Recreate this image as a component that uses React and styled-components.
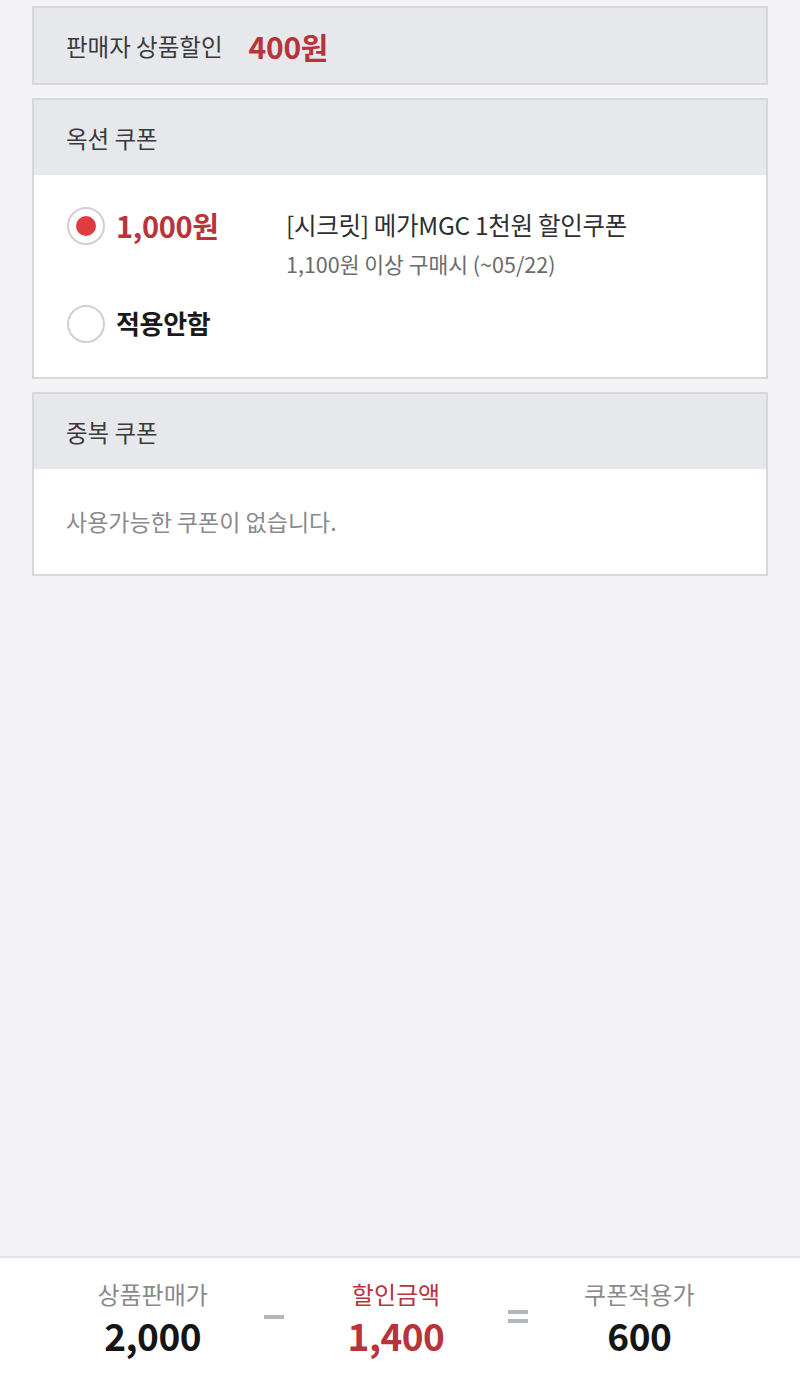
import React, { useState } from 'react';
import styled, { createGlobalStyle } from 'styled-components';

const GlobalStyle = createGlobalStyle`
  html, body {
    margin: 0;
    padding: 0;
    background: #f4f4f6;
  }
  body {
    font-family: "Noto Sans CJK KR", "Noto Sans", sans-serif;
    -webkit-font-smoothing: antialiased;
  }
`;

const Page = styled.div`
  min-height: 1374px;
  display: flex;
  flex-flow: column nowrap;
  box-sizing: border-box;
`;

const Content = styled.div`
  display: flex;
  flex-flow: column nowrap;
  gap: 13px;
  padding: 6px 32px 0;
`;

const Card = styled.div`
  border: 2px solid #d6d8dc;
  background: #ffffff;
`;

const CardHead = styled.div`
  height: 75px;
  display: flex;
  align-items: center;
  padding: 0 32px;
  background: #e7e8ec;
  font-size: 23.5px;
  color: #3a3a3c;
  letter-spacing: 0;
  span {
    margin-left: 26px;
    font-size: 30px;
    font-weight: 700;
    color: #b8333a;
    letter-spacing: -0.3px;
  }
`;

const CardBody = styled.div`
  padding: ${(p) => p.$pad || '24px 32px'};
  display: flex;
  flex-flow: column nowrap;
  gap: ${(p) => p.$gap || '0'};
`;

const OptionRow = styled.label`
  display: grid;
  grid-template-columns: 50px 170px 1fr;
  align-items: start;
  cursor: pointer;
`;

const Radio = styled.span`
  width: 34px;
  height: 34px;
  margin-left: 1px;
  margin-top: 1px;
  border-radius: 50%;
  border: 2px solid #cfd0d3;
  background: #fff;
  display: flex;
  align-items: center;
  justify-content: center;
  &::after {
    content: '';
    width: 20px;
    height: 20px;
    border-radius: 50%;
    background: ${(p) => (p.$checked ? '#e03c40' : 'transparent')};
  }
`;

const Amount = styled.div`
  font-size: ${(p) => (p.$red ? '29px' : '26px')};
  font-weight: 700;
  line-height: 38px;
  color: ${(p) => (p.$red ? '#b8333a' : '#1a1a1a')};
  letter-spacing: -0.3px;
`;

const CouponInfo = styled.div`
  display: flex;
  flex-flow: column nowrap;
  gap: 6px;
`;

const CouponTitle = styled.div`
  font-size: 24.5px;
  line-height: 38px;
  color: #2f2f31;
  letter-spacing: -0.3px;
`;

const CouponSub = styled.div`
  font-size: 21.5px;
  line-height: 28px;
  color: #6b6b6e;
  letter-spacing: 0;
`;

const Empty = styled.div`
  font-size: 23px;
  line-height: 30px;
  color: #8a8a8d;
  letter-spacing: 0;
`;

const Summary = styled.div`
  margin-top: auto;
  height: 116px;
  border-top: 2px solid #e3e4e7;
  background: #ffffff;
  display: grid;
  grid-template-columns: 1fr 0 1fr 0 1fr;
  padding: 0 39px 0 31px;
  align-items: center;
`;

const SumCol = styled.div`
  display: flex;
  flex-flow: column nowrap;
  align-items: center;
  padding-top: 4px;
`;

const SumLabel = styled.div`
  font-size: 24px;
  line-height: 34px;
  color: ${(p) => (p.$red ? '#b8333a' : '#8a8a8d')};
  letter-spacing: 0;
`;

const SumValue = styled.div`
  font-size: 37px;
  line-height: 48px;
  font-weight: 700;
  color: ${(p) => (p.$red ? '#b8333a' : '#151515')};
  letter-spacing: -0.5px;
`;

const Operator = styled.div`
  justify-self: center;
  width: 24px;
  margin-top: ${(p) => p.$offset || '0'};
  display: flex;
  flex-flow: column nowrap;
  gap: 5px;
  align-items: center;
  i {
    display: block;
    width: 20px;
    height: 4px;
    background: #b4b6be;
  }
`;

const coupons = [
  {
    id: 'mgc',
    amount: '1,000원',
    title: '[시크릿] 메가MGC 1천원 할인쿠폰',
    sub: '1,100원 이상 구매시 (~05/22)',
  },
];

export default function App() {
  const [selected, setSelected] = useState('mgc');

  return (
    <Page>
      <GlobalStyle />
      <Content>
        <Card>
          <CardHead>
            판매자 상품할인<span>400원</span>
          </CardHead>
        </Card>

        <Card>
          <CardHead>옥션 쿠폰</CardHead>
          <CardBody $pad="31px 32px 34px" $gap="26px">
            {coupons.map((c) => (
              <OptionRow key={c.id} onClick={() => setSelected(c.id)}>
                <Radio $checked={selected === c.id} />
                <Amount $red>{c.amount}</Amount>
                <CouponInfo>
                  <CouponTitle>{c.title}</CouponTitle>
                  <CouponSub>{c.sub}</CouponSub>
                </CouponInfo>
              </OptionRow>
            ))}
            <OptionRow onClick={() => setSelected('none')}>
              <Radio $checked={selected === 'none'} />
              <Amount>적용안함</Amount>
            </OptionRow>
          </CardBody>
        </Card>

        <Card>
          <CardHead>중복 쿠폰</CardHead>
          <CardBody $pad="37px 32px 38px">
            <Empty>사용가능한 쿠폰이 없습니다.</Empty>
          </CardBody>
        </Card>
      </Content>

      <Summary>
        <SumCol>
          <SumLabel>상품판매가</SumLabel>
          <SumValue>2,000</SumValue>
        </SumCol>
        <Operator $offset="2px">
          <i />
        </Operator>
        <SumCol>
          <SumLabel $red>할인금액</SumLabel>
          <SumValue $red>1,400</SumValue>
        </SumCol>
        <Operator>
          <i />
          <i />
        </Operator>
        <SumCol>
          <SumLabel>쿠폰적용가</SumLabel>
          <SumValue>600</SumValue>
        </SumCol>
      </Summary>
    </Page>
  );
}
